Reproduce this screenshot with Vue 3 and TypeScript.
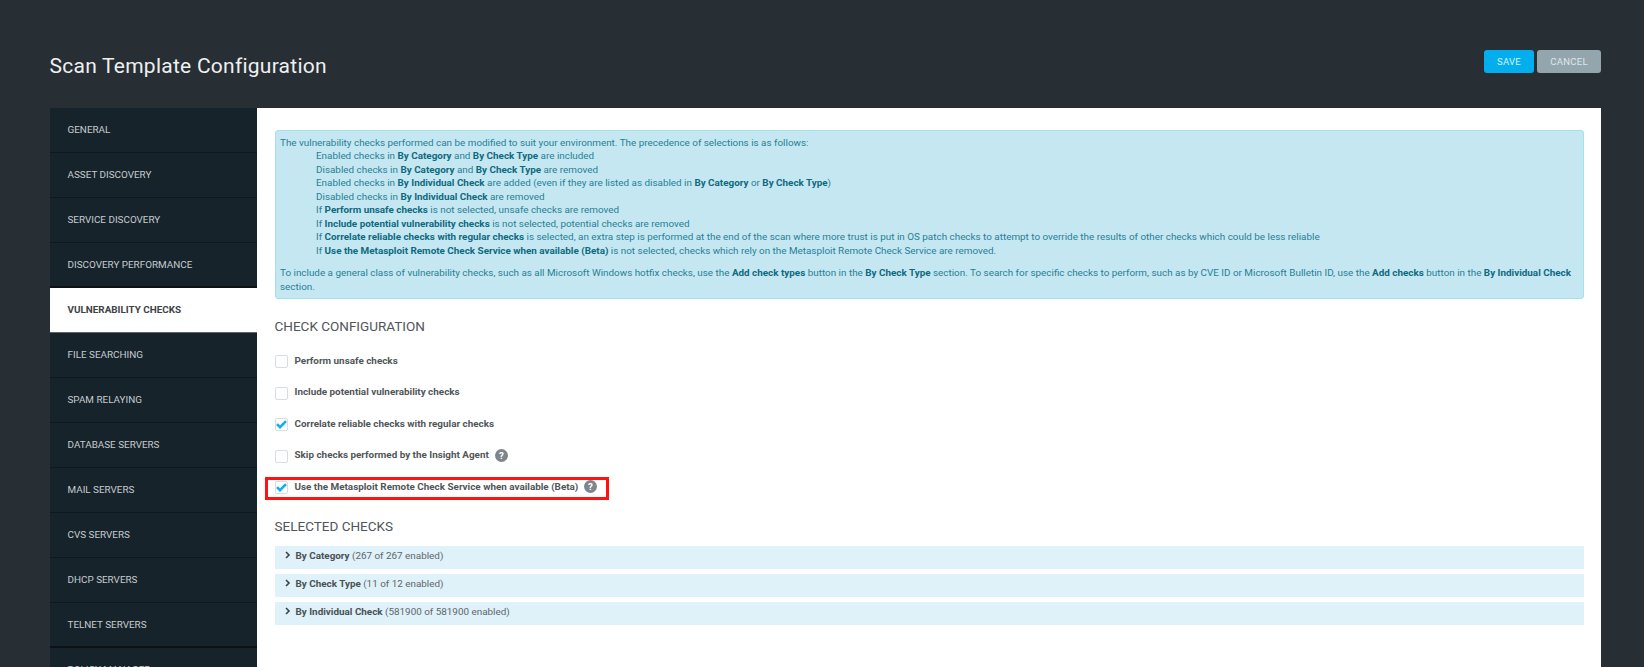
<script setup lang="ts">
const navItems: string[] = [
  'GENERAL', 'ASSET DISCOVERY', 'SERVICE DISCOVERY', 'DISCOVERY PERFORMANCE',
  'VULNERABILITY CHECKS', 'FILE SEARCHING', 'SPAM RELAYING', 'DATABASE SERVERS',
  'MAIL SERVERS', 'CVS SERVERS', 'DHCP SERVERS', 'TELNET SERVERS', 'POLICY MANAGER',
]
const checks = [
  { label: 'Perform unsafe checks', on: false, help: false, mark: false },
  { label: 'Include potential vulnerability checks', on: false, help: false, mark: false },
  { label: 'Correlate reliable checks with regular checks', on: true, help: false, mark: false },
  { label: 'Skip checks performed by the Insight Agent', on: false, help: true, mark: false },
  { label: 'Use the Metasploit Remote Check Service when available (Beta)', on: true, help: true, mark: true },
]
const groups = [
  { name: 'By Category', note: '(267 of 267 enabled)' },
  { name: 'By Check Type', note: '(11 of 12 enabled)' },
  { name: 'By Individual Check', note: '(581900 of 581900 enabled)' },
]
</script>

<template>
  <div class="page">
    <header class="top">
      <h1>Scan Template Configuration</h1>
      <div class="actions">
        <button class="btn save">SAVE</button>
        <button class="btn cancel">CANCEL</button>
      </div>
    </header>
    <div class="body">
      <nav class="side">
        <a v-for="item in navItems" :key="item" class="nav" :class="{ active: item === 'VULNERABILITY CHECKS' }">{{ item }}</a>
      </nav>
      <main class="content">
        <div class="info">
          <div>The vulnerability checks performed can be modified to suit your environment. The precedence of selections is as follows:</div>
          <div class="ind">Enabled checks in <b>By Category</b> and <b>By Check Type</b> are included</div>
          <div class="ind">Disabled checks in <b>By Category</b> and <b>By Check Type</b> are removed</div>
          <div class="ind">Enabled checks in <b>By Individual Check</b> are added (even if they are listed as disabled in <b>By Category</b> or <b>By Check Type</b>)</div>
          <div class="ind">Disabled checks in <b>By Individual Check</b> are removed</div>
          <div class="ind">If <b>Perform unsafe checks</b> is not selected, unsafe checks are removed</div>
          <div class="ind">If <b>Include potential vulnerability checks</b> is not selected, potential checks are removed</div>
          <div class="ind">If <b>Correlate reliable checks with regular checks</b> is selected, an extra step is performed at the end of the scan where more trust is put in OS patch checks to attempt to override the results of other checks which could be less reliable</div>
          <div class="ind">If <b>Use the Metasploit Remote Check Service when available (Beta)</b> is not selected, checks which rely on the Metasploit Remote Check Service are removed.</div>
          <p>To include a general class of vulnerability checks, such as all Microsoft Windows hotfix checks, use the <b>Add check types</b> button in the <b>By Check Type</b> section. To search for specific checks to perform, such as by CVE ID or Microsoft Bulletin ID, use the <b>Add checks</b> button in the <b>By Individual Check</b> section.</p>
        </div>
        <h2 class="h-config">CHECK CONFIGURATION</h2>
        <div class="checks">
          <div v-for="c in checks" :key="c.label" class="check" :class="{ mark: c.mark }">
            <span class="box">
              <svg v-if="c.on" width="11" height="9" viewBox="0 0 11 9"><path d="M1 4.2l3 3 6-6" fill="none" stroke="#0fb0f2" stroke-width="2.6" /></svg>
            </span>
            <span class="label">{{ c.label }}</span>
            <svg v-if="c.help" class="help" width="13" height="13" viewBox="0 0 14 14">
              <circle cx="7" cy="7" r="7" fill="#7d868d" />
              <text x="7" y="10.8" text-anchor="middle" font-size="10.5" font-weight="700" font-family="Roboto, sans-serif" fill="#fff">?</text>
            </svg>
          </div>
        </div>
        <h2 class="h-selected">SELECTED CHECKS</h2>
        <div class="groups">
          <div v-for="g in groups" :key="g.name" class="group">
            <svg class="chev" width="6" height="8" viewBox="0 0 6 8"><path d="M1 1l3 3-3 3" fill="none" stroke="#3c4448" stroke-width="1.6" /></svg>
            <b>{{ g.name }}</b>&nbsp;<span>{{ g.note }}</span>
          </div>
        </div>
      </main>
    </div>
  </div>
</template>

<style>
html, body { margin: 0; background: #272e34; overflow: hidden; }
</style>

<style scoped>
.page {
  height: 667px;
  overflow: hidden;
  background: #272e34;
  padding: 0 43px 0 49.5px;
  box-sizing: border-box;
  font-family: Roboto, "Liberation Sans", sans-serif;
}
.top { height: 108px; display: flex; justify-content: space-between; align-items: flex-start; }
h1 { margin: 51px 0 0; font-size: 21px; line-height: 30px; font-weight: 400; color: #eef0f1; letter-spacing: 0.25px; }
.actions { display: flex; gap: 3px; margin-top: 50px; }
.btn { height: 23px; border: 0; border-radius: 3px; color: #dfe7ea; font: 400 9.5px/23px Roboto, sans-serif; letter-spacing: 0.3px; padding: 0; }
.save { width: 50px; background: #03aeef; color: #d6f2fd; }
.cancel { width: 64px; background: #93a6ae; }
.body { display: flex; align-items: flex-start; }
.side { width: 207px; flex: none; background: #17232b; }
.nav {
  display: block;
  height: 44px;
  line-height: 44px;
  padding-left: 18px;
  font-size: 9.9px;
  color: #c5cbcf;
  border-bottom: 1px solid #0f181d;
}
.nav:nth-child(4) { height: 43px; border-bottom: 2px solid #0b1114; }
.nav.active { background: #fff; color: #3d4346; font-weight: 700; border-bottom-color: #5c6468; }
.nav:nth-child(12) { border-bottom: 2px solid #0b1114; height: 43px; }
.content { flex: 1; background: #fff; height: 559px; padding: 22px 17px 0 18px; box-sizing: border-box; }
.info {
  background: #c5e7f1;
  border: 1px solid #a6e0ea;
  border-radius: 3px;
  color: #277f95;
  font-size: 9.9px;
  line-height: 13.5px;
  padding: 4.5px 5px 4px 4.5px;
  height: 168.5px;
  box-sizing: border-box;
}
.info b { color: #0e6a80; font-weight: 700; }
.ind { padding-left: 36px; }
.info p { margin: 9px 0 0; }
h2 { margin: 0; font-size: 13.5px; font-weight: 400; color: #50565a; line-height: 18px; }
.h-config { margin-top: 18px; }
.checks { margin-top: 10px; display: flex; flex-direction: column; }
.check { display: flex; align-items: center; height: 31.5px; position: relative; font-size: 9.9px; }
.box {
  width: 11px; height: 11px; border: 1px solid #d8dde0; border-radius: 2px; background: #fff;
  display: flex; align-items: center; justify-content: center; box-sizing: content-box; flex: none; margin-top: 3px;
}
.label { margin-left: 7px; font-weight: 700; color: #50565a; }
.help { margin-left: 6px; margin-top: 1px; }
.check.mark::after {
  content: '';
  position: absolute;
  left: -9.5px; top: 6px;
  width: 344px; height: 23px;
  border: 3px solid #ff1212;
  box-sizing: border-box;
}
.h-selected { margin-top: 14.5px; }
.groups { margin-top: 11px; display: flex; flex-direction: column; gap: 5px; }
.group { height: 23px; box-sizing: border-box; padding: 0 0 4px 10px; background: #dff1f9; display: flex; align-items: center; font-size: 9.9px; color: #5f6569; }
.group b { color: #4a5054; font-weight: 700; }
.chev { margin-right: 5px; }
</style>
